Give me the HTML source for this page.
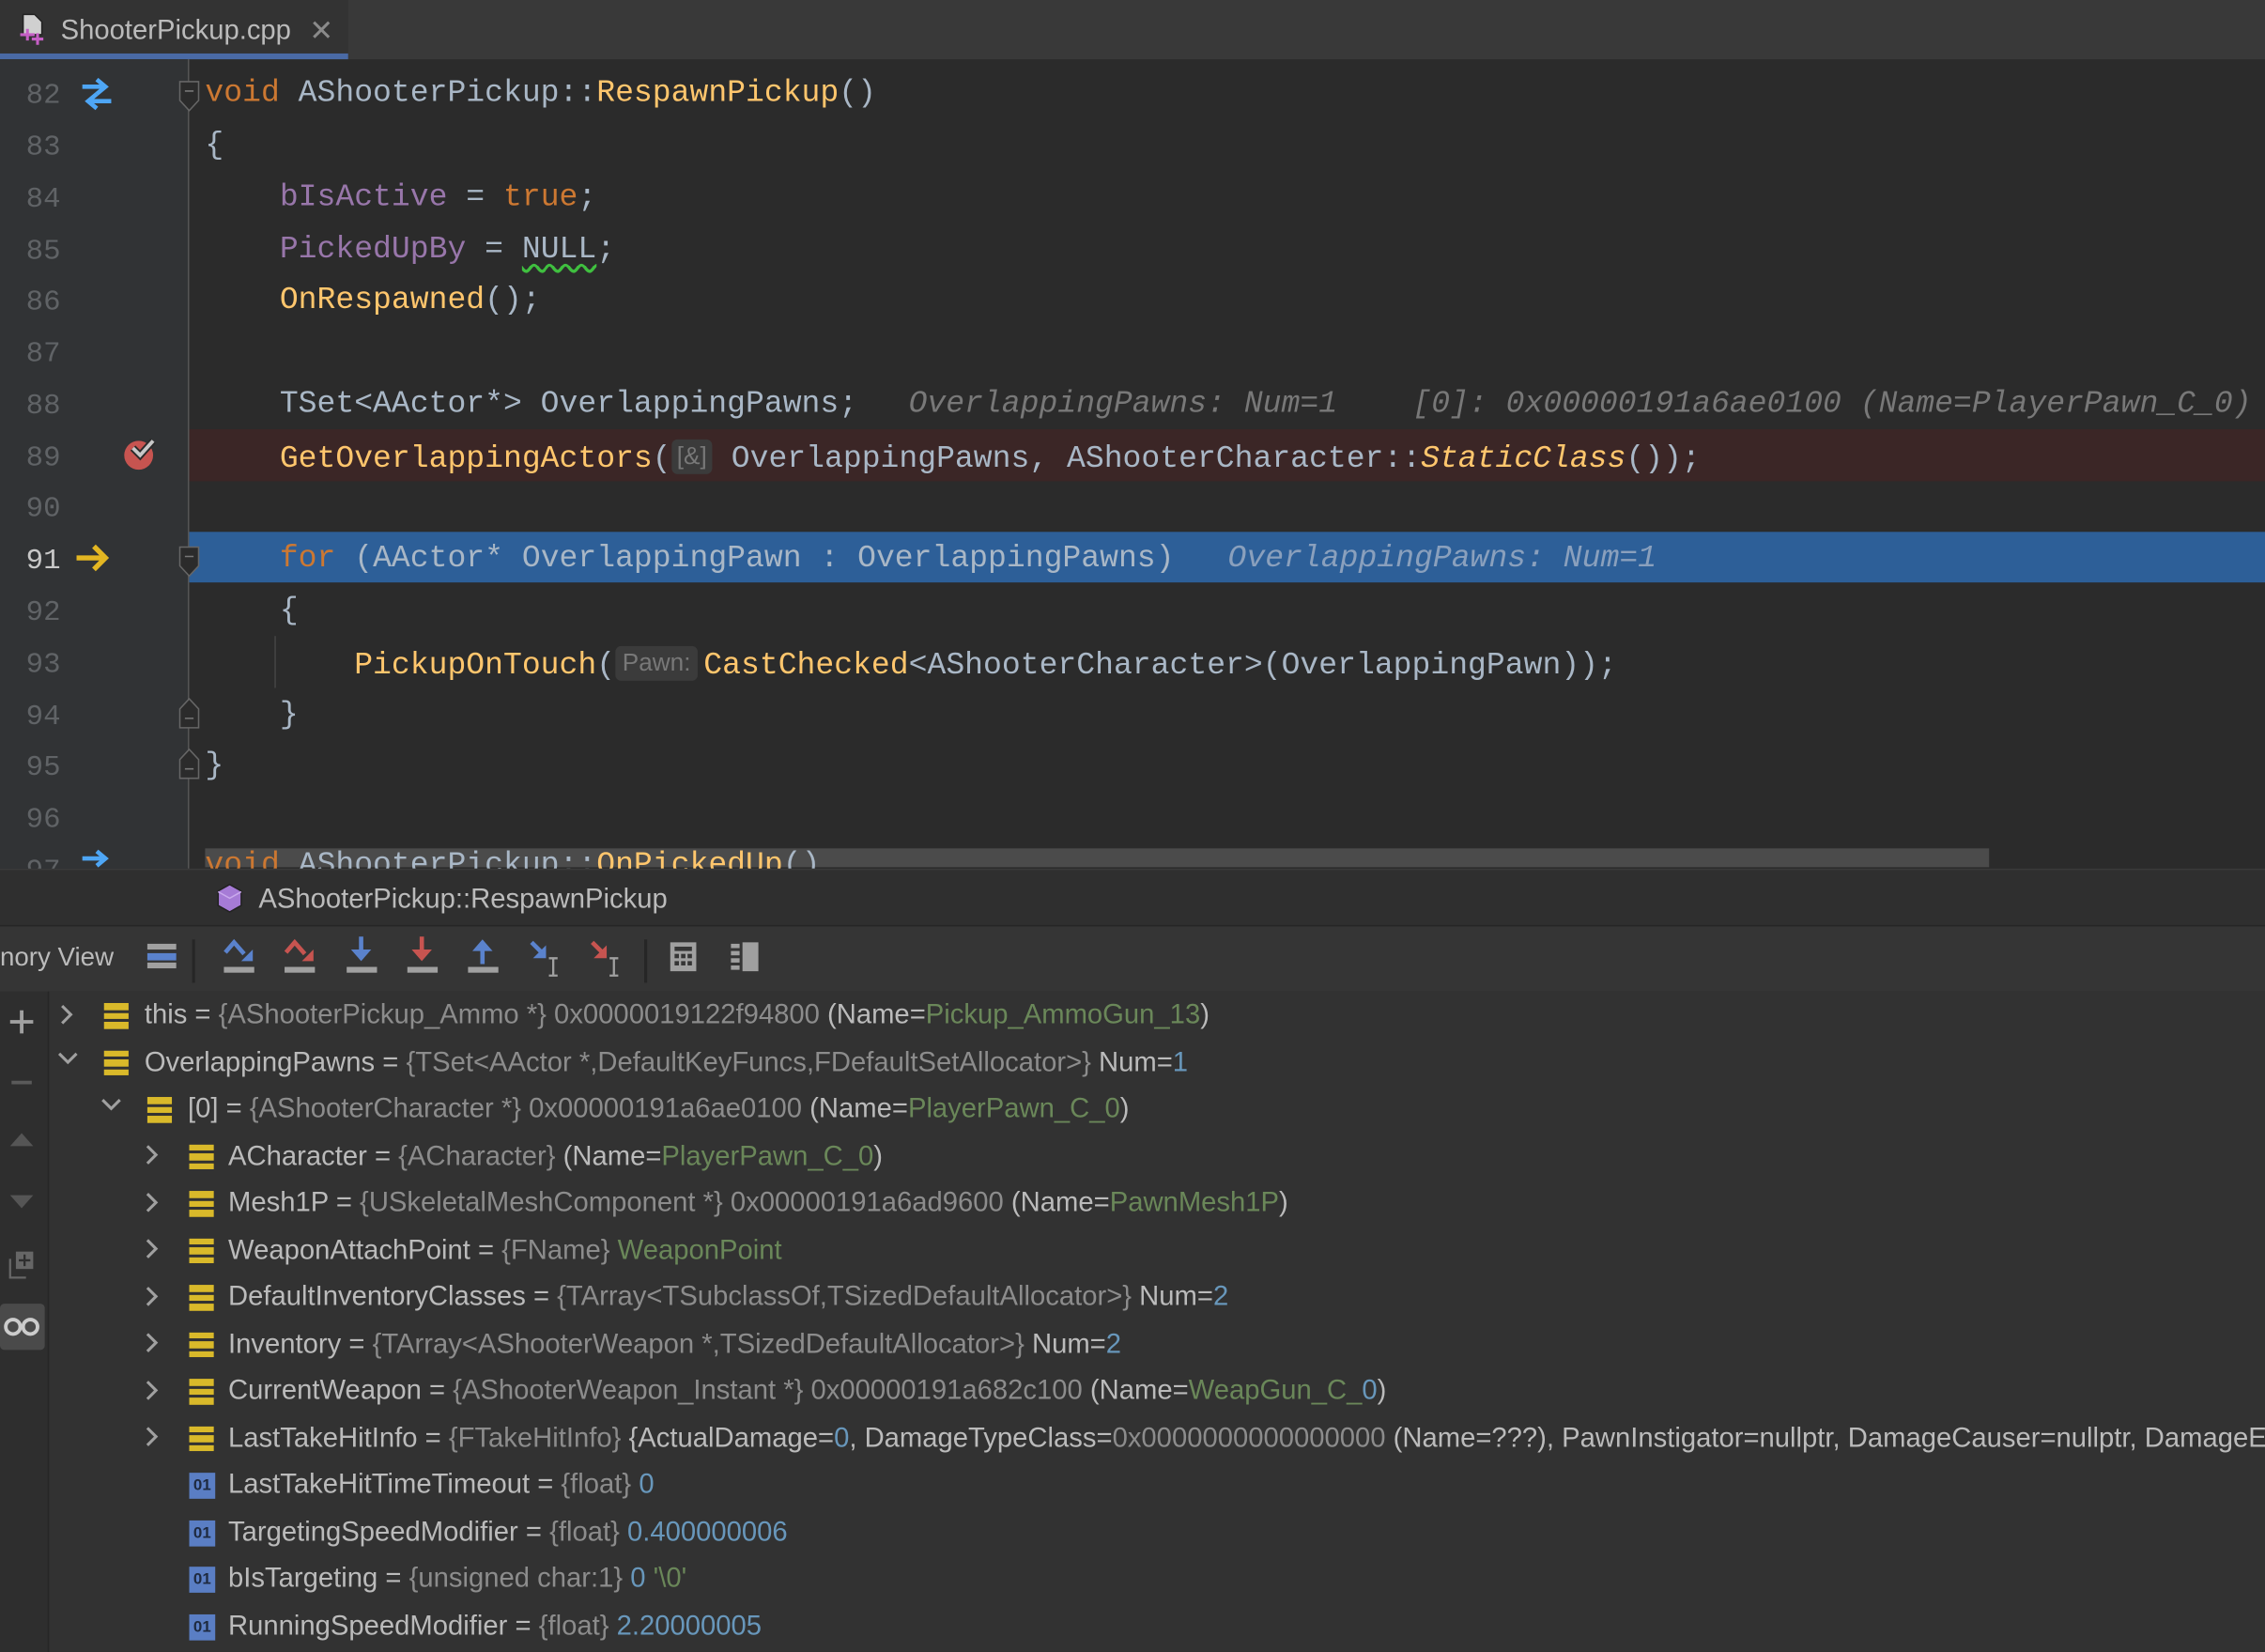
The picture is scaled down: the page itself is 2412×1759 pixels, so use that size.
<!DOCTYPE html>
<html><head><meta charset="utf-8">
<style>
*{margin:0;padding:0;box-sizing:border-box}
html,body{width:2412px;height:1759px;overflow:hidden;background:#2b2b2b}
#w{position:absolute;left:0;top:0;width:1568px;height:1143px;transform:scale(1.53827,1.5389);transform-origin:0 0;overflow:hidden;background:#2b2b2b}
.a{position:absolute}
.mono{font-family:"Liberation Mono",monospace;font-size:21.5px;white-space:pre;color:#a9b7c6}
.ln{position:absolute;left:0;width:42px;text-align:right;font-family:"Liberation Mono",monospace;font-size:20px;color:#606366}
.k{color:#cc7832}.f{color:#ffc66d}.p{color:#9876aa}.h{color:#787878;font-style:italic}
.hint{display:inline-block;background:#3b3b3b;color:#787878;font-family:"Liberation Sans",sans-serif;font-size:17px;border-radius:4px;padding:0 4px;line-height:24px;vertical-align:2px}
.row{position:absolute;height:32.5px;line-height:32.5px;font-family:"Liberation Sans",sans-serif;font-size:19px;white-space:pre;color:#bbbbbb}
.t{color:#8c8c8c}.g{color:#6a8759}.n{color:#6897bb}
.ic{position:absolute;width:17px;height:18px;top:7px}
.ic i{position:absolute;left:0;width:17px;height:4.5px;background:#d9b92a}
.num{position:absolute;width:18px;height:18px;top:7px;background:#5a7ec4;color:#1e2a40;font-size:11px;line-height:18px;text-align:center;font-weight:bold;font-family:"Liberation Sans",sans-serif}
</style></head><body><div id="w">
<div class="a" style="left:0;top:0;width:1568px;height:41px;background:#393939"></div>
<div class="a" style="left:0;top:0;width:241px;height:41px;background:#333333"></div>
<div class="a" style="left:0;top:37px;width:241px;height:4px;background:#4a6aa5"></div>
<svg class="a" style="left:12px;top:9px" width="22" height="24" viewBox="0 0 22 24"><path d="M4 1h8l5 5v9H4z" fill="#d0d0d0" stroke="#222" stroke-width="1"/><path d="M2 14h4v-3h2v3h4v2H8v3H6v-3H2z M10 17h3v-3h2v3h3v2h-3v3h-2v-3h-3z" fill="#c65fc6"/></svg>
<div class="a" style="left:42px;top:11px;font-family:'Liberation Sans',sans-serif;font-size:19px;color:#bbbbbb">ShooterPickup.cpp</div>
<div class="a" style="left:214px;top:9px;font-family:'Liberation Sans',sans-serif;font-size:20px;color:#8a8a8a">✕</div>
<div class="a" style="left:0;top:41px;width:131px;height:560px;background:#313335"></div>
<div class="a" style="left:130px;top:41px;width:1px;height:560px;background:#555"></div>
<div class="a" style="left:131px;top:297px;width:1437px;height:36px;background:#3b2626"></div>
<div class="a" style="left:131px;top:368px;width:1437px;height:35px;background:#2d5f98"></div>
<div class="ln" style="top:55px">82</div>
<div class="ln" style="top:91px">83</div>
<div class="ln" style="top:127px">84</div>
<div class="ln" style="top:163px">85</div>
<div class="ln" style="top:198px">86</div>
<div class="ln" style="top:234px">87</div>
<div class="ln" style="top:270px">88</div>
<div class="ln" style="top:306px">89</div>
<div class="ln" style="top:341px">90</div>
<div class="ln" style="top:377px;color:#c8c8c8">91</div>
<div class="ln" style="top:413px">92</div>
<div class="ln" style="top:449px">93</div>
<div class="ln" style="top:485px">94</div>
<div class="ln" style="top:520px">95</div>
<div class="ln" style="top:556px">96</div>
<div class="ln" style="top:592px">97</div>
<svg class="a" style="left:54px;top:52px" width="26" height="26" viewBox="0 0 26 26"><path d="M3 8h14M13 3l6 5-6 5" stroke="#4ea6f5" stroke-width="3" fill="none"/><path d="M23 18H9M13 13l-6 5 6 5" stroke="#4ea6f5" stroke-width="3" fill="none"/></svg>
<svg class="a" style="left:54px;top:586px" width="26" height="16" viewBox="0 0 26 16"><path d="M3 8h14M13 3l6 5-6 5" stroke="#4ea6f5" stroke-width="3" fill="none"/></svg>
<svg class="a" style="left:84px;top:300px" width="26" height="28" viewBox="0 0 26 28"><circle cx="12" cy="15" r="10" fill="#c75450"/><path d="M8 10l5 5 9-10" stroke="#2b2b2b" stroke-width="5" fill="none"/><path d="M8 10l5 5 9-10" stroke="#c8c8c8" stroke-width="2.5" fill="none"/></svg>
<svg class="a" style="left:51px;top:374px" width="26" height="24" viewBox="0 0 26 24"><path d="M2 12h20M14 4l8 8-8 8" stroke="#e3b622" stroke-width="3.5" fill="none"/></svg>
<svg class="a" style="left:123px;top:55px" width="16" height="24"><path d="M1.5 1.5h13v13l-6.5 7-6.5-7z" fill="#2b2b2b" stroke="#666"/><path d="M5 8h6" stroke="#777"/></svg>
<svg class="a" style="left:123px;top:377px" width="16" height="24"><path d="M1.5 1.5h13v13l-6.5 7-6.5-7z" fill="#2b2b2b" stroke="#666"/><path d="M5 8h6" stroke="#777"/></svg>
<svg class="a" style="left:123px;top:482px" width="16" height="24"><path d="M8 1.5l6.5 7v13h-13v-13z" fill="#2b2b2b" stroke="#666"/><path d="M5 15h6" stroke="#777"/></svg>
<svg class="a" style="left:123px;top:517px" width="16" height="24"><path d="M8 1.5l6.5 7v13h-13v-13z" fill="#2b2b2b" stroke="#666"/><path d="M5 15h6" stroke="#777"/></svg>
<div class="a" style="left:190px;top:440px;width:1px;height:36px;background:#444"></div>
<div class="a mono" style="left:142px;top:53px"><span class="k">void</span> AShooterPickup::<span class="f">RespawnPickup</span>()</div>
<div class="a mono" style="left:142px;top:89px">{</div>
<div class="a mono" style="left:142px;top:125px">    <span class="p">bIsActive</span> = <span class="k">true</span>;</div>
<div class="a mono" style="left:142px;top:161px">    <span class="p">PickedUpBy</span> = <span style="text-decoration:underline wavy #3fbf3f;text-underline-offset:4px">NULL</span>;</div>
<div class="a mono" style="left:142px;top:196px">    <span class="f">OnRespawned</span>();</div>
<div class="a mono" style="left:142px;top:268px">    TSet&lt;AActor*&gt; OverlappingPawns;</div>
<div class="a mono h" style="left:629px;top:268px">OverlappingPawns: Num=1</div>
<div class="a mono h" style="left:978px;top:268px">[0]: 0x00000191a6ae0100 (Name=PlayerPawn_C_0)</div>
<div class="a mono" style="left:142px;top:304px">    <span class="f">GetOverlappingActors</span>(<span class="hint">[&amp;]</span> OverlappingPawns, AShooterCharacter::<span class="f" style="font-style:italic">StaticClass</span>());</div>
<div class="a mono" style="left:142px;top:375px">    <span class="k">for</span> (AActor* OverlappingPawn : OverlappingPawns)</div>
<div class="a mono h" style="left:850px;top:375px;color:#8aa0bd">OverlappingPawns: Num=1</div>
<div class="a mono" style="left:142px;top:411px">    {</div>
<div class="a mono" style="left:142px;top:447px">        <span class="f">PickupOnTouch</span>(<span class="hint" style="margin-right:4px;padding:0 5px">Pawn:</span><span class="f">CastChecked</span>&lt;AShooterCharacter&gt;(OverlappingPawn));</div>
<div class="a mono" style="left:142px;top:483px">    }</div>
<div class="a mono" style="left:142px;top:518px">}</div>
<div class="a" style="left:142px;top:587px;width:1235px;height:13px;background:#4b4b4b"></div>
<div class="a mono" style="left:142px;top:587px;height:14px;overflow:hidden"><span class="k">void</span> AShooterPickup::<span class="f">OnPickedUp</span>()</div>
<div class="a" style="left:0;top:601px;width:1568px;height:39px;background:#2f2f2f;border-top:1px solid #3a3a3a"></div>
<svg class="a" style="left:149px;top:611px" width="20" height="22" viewBox="0 0 20 22"><path d="M10 1l8 4.5v10L10 20l-8-4.5v-10z" fill="#a67bd6" stroke="#222"/><path d="M2 6l8 4.5 8-4.5" stroke="#c9a9ec" fill="none"/></svg>
<div class="a" style="left:179px;top:612px;font-family:'Liberation Sans',sans-serif;font-size:19px;color:#bbbbbb">AShooterPickup::RespawnPickup</div>
<div class="a" style="left:0;top:640px;width:1568px;height:46px;background:#353535;border-top:1px solid #262626"></div>
<div class="a" style="left:0;top:652px;font-family:'Liberation Sans',sans-serif;font-size:18px;color:#bbbbbb">nory View</div>
<svg class="a" style="left:0;top:640px" width="540" height="46">
<g fill="#a0a0a0"><rect x="102" y="13" width="20" height="4"/><rect x="102" y="26" width="20" height="4"/></g><rect x="102" y="19.5" width="20" height="5" fill="#5a82cc"/>
<rect x="133" y="10" width="2" height="30" fill="#262626"/>
<g fill="#a0a0a0"><rect x="155" y="29" width="21" height="4"/><rect x="197" y="29" width="21" height="4"/><rect x="240" y="29" width="21" height="4"/><rect x="282" y="29" width="21" height="4"/><rect x="324" y="29" width="21" height="4"/></g>
<path d="M156 19l6-7 7 8" stroke="#5a82cc" stroke-width="3" fill="none"/><path d="M175 17v8h-8z" fill="#5a82cc"/>
<path d="M198 19l6-7 7 8" stroke="#c75450" stroke-width="3" fill="none"/><path d="M217 17v8h-8z" fill="#c75450"/>
<path d="M250 8v12" stroke="#5a82cc" stroke-width="3"/><path d="M243 17h14l-7 8z" fill="#5a82cc"/>
<path d="M292 8v12" stroke="#c75450" stroke-width="3"/><path d="M285 17h14l-7 8z" fill="#c75450"/>
<path d="M334 15v12" stroke="#5a82cc" stroke-width="3"/><path d="M327 18h14l-7-8z" fill="#5a82cc"/>
<path d="M368 12l8 8" stroke="#5a82cc" stroke-width="3"/><path d="M378 14v9h-9z" fill="#5a82cc"/><path d="M380 23h6M383 23v12M380 35h6" stroke="#a0a0a0" stroke-width="1.5"/>
<path d="M410 12l8 8" stroke="#c75450" stroke-width="3"/><path d="M420 14v9h-9z" fill="#c75450"/><path d="M422 23h6M425 23v12M422 35h6" stroke="#a0a0a0" stroke-width="1.5"/>
<rect x="446" y="10" width="2" height="30" fill="#262626"/>
<rect x="464" y="12" width="18" height="20" fill="#a0a0a0"/><rect x="467" y="15" width="12" height="3" fill="#353535"/><g fill="#353535"><rect x="467" y="20" width="3" height="3"/><rect x="471.5" y="20" width="3" height="3"/><rect x="476" y="20" width="3" height="3"/><rect x="467" y="25" width="3" height="3"/><rect x="471.5" y="25" width="3" height="3"/><rect x="476" y="25" width="3" height="3"/></g>
<g fill="#a0a0a0"><rect x="506" y="13" width="6" height="3"/><rect x="506" y="18" width="6" height="3"/><rect x="506" y="23" width="6" height="3"/><rect x="506" y="28" width="6" height="3"/><rect x="514" y="12" width="11" height="20"/></g>
</svg>
<div class="a" style="left:0;top:686px;width:1568px;height:457px;background:#323232"></div>
<div class="a" style="left:0;top:686px;width:34px;height:457px;background:#2e2e2e;border-right:1px solid #262626"></div>
<svg class="a" style="left:0;top:686px" width="34" height="260">
<path d="M15 13v16M7 21h16" stroke="#a0a0a0" stroke-width="2.5"/>
<path d="M8 63h14" stroke="#5a5a5a" stroke-width="2.5"/>
<path d="M15 98l8 9H7z" fill="#555"/>
<path d="M7 141h16l-8 9z" fill="#555"/>
<path d="M7 185v13h11" stroke="#666" stroke-width="1.5" fill="none"/><rect x="11" y="180" width="12" height="12" fill="#666"/><path d="M17 182v8M13 186h8" stroke="#2e2e2e" stroke-width="1.5"/>
<rect x="0" y="216" width="31" height="32" rx="3" fill="#4a4a4a"/><circle cx="9" cy="232" r="5" stroke="#ccc" stroke-width="2.5" fill="none"/><circle cx="21" cy="232" r="5" stroke="#ccc" stroke-width="2.5" fill="none"/>
</svg>
<svg class="a" style="left:0;top:686px" width="130" height="330" fill="none" stroke="#a0a0a0" stroke-width="2">
<path d="M43 10l6 6-6 6"/><path d="M41 43l6 6 6-6"/><path d="M71 75l6 6 6-6"/>
<path d="M102 107l6 6-6 6"/><path d="M102 140l6 6-6 6"/><path d="M102 172l6 6-6 6"/><path d="M102 205l6 6-6 6"/><path d="M102 237l6 6-6 6"/><path d="M102 270l6 6-6 6"/><path d="M102 302l6 6-6 6"/>
</svg>
<div class="row" style="left:0;top:687px;width:1568px"><div class="ic" style="left:72px"><i style="top:0"></i><i style="top:6.5px"></i><i style="top:13px"></i></div><span style="position:absolute;left:100px">this = <span class="t">{AShooterPickup_Ammo *} 0x0000019122f94800</span> (Name=<span class="g">Pickup_AmmoGun_13</span>)</span></div>
<div class="row" style="left:0;top:719.5px;width:1568px"><div class="ic" style="left:72px"><i style="top:0"></i><i style="top:6.5px"></i><i style="top:13px"></i></div><span style="position:absolute;left:100px">OverlappingPawns = <span class="t">{TSet&lt;AActor *,DefaultKeyFuncs,FDefaultSetAllocator&gt;}</span> Num=<span class="n">1</span></span></div>
<div class="row" style="left:0;top:752px;width:1568px"><div class="ic" style="left:102px"><i style="top:0"></i><i style="top:6.5px"></i><i style="top:13px"></i></div><span style="position:absolute;left:130px">[0] = <span class="t">{AShooterCharacter *} 0x00000191a6ae0100</span> (Name=<span class="g">PlayerPawn_C_0</span>)</span></div>
<div class="row" style="left:0;top:784.5px;width:1568px"><div class="ic" style="left:131px"><i style="top:0"></i><i style="top:6.5px"></i><i style="top:13px"></i></div><span style="position:absolute;left:158px">ACharacter = <span class="t">{ACharacter}</span> (Name=<span class="g">PlayerPawn_C_0</span>)</span></div>
<div class="row" style="left:0;top:817px;width:1568px"><div class="ic" style="left:131px"><i style="top:0"></i><i style="top:6.5px"></i><i style="top:13px"></i></div><span style="position:absolute;left:158px">Mesh1P = <span class="t">{USkeletalMeshComponent *} 0x00000191a6ad9600</span> (Name=<span class="g">PawnMesh1P</span>)</span></div>
<div class="row" style="left:0;top:849.5px;width:1568px"><div class="ic" style="left:131px"><i style="top:0"></i><i style="top:6.5px"></i><i style="top:13px"></i></div><span style="position:absolute;left:158px">WeaponAttachPoint = <span class="t">{FName}</span> <span class="g">WeaponPoint</span></span></div>
<div class="row" style="left:0;top:882px;width:1568px"><div class="ic" style="left:131px"><i style="top:0"></i><i style="top:6.5px"></i><i style="top:13px"></i></div><span style="position:absolute;left:158px">DefaultInventoryClasses = <span class="t">{TArray&lt;TSubclassOf,TSizedDefaultAllocator&gt;}</span> Num=<span class="n">2</span></span></div>
<div class="row" style="left:0;top:914.5px;width:1568px"><div class="ic" style="left:131px"><i style="top:0"></i><i style="top:6.5px"></i><i style="top:13px"></i></div><span style="position:absolute;left:158px">Inventory = <span class="t">{TArray&lt;AShooterWeapon *,TSizedDefaultAllocator&gt;}</span> Num=<span class="n">2</span></span></div>
<div class="row" style="left:0;top:947px;width:1568px"><div class="ic" style="left:131px"><i style="top:0"></i><i style="top:6.5px"></i><i style="top:13px"></i></div><span style="position:absolute;left:158px">CurrentWeapon = <span class="t">{AShooterWeapon_Instant *} 0x00000191a682c100</span> (Name=<span class="g">WeapGun_C_</span><span class="n">0</span>)</span></div>
<div class="row" style="left:0;top:979.5px;width:1568px;overflow:hidden"><div class="ic" style="left:131px"><i style="top:0"></i><i style="top:6.5px"></i><i style="top:13px"></i></div><span style="position:absolute;left:158px">LastTakeHitInfo = <span class="t">{FTakeHitInfo}</span> {ActualDamage=<span class="n">0</span>, DamageTypeClass=<span class="t">0x0000000000000000</span> (Name=???), PawnInstigator=nullptr, DamageCauser=nullptr, DamageEventClassID=0}</span></div>
<div class="row" style="left:0;top:1012px;width:1568px"><div class="num" style="left:131px">01</div><span style="position:absolute;left:158px">LastTakeHitTimeTimeout = <span class="t">{float}</span> <span class="n">0</span></span></div>
<div class="row" style="left:0;top:1044.5px;width:1568px"><div class="num" style="left:131px">01</div><span style="position:absolute;left:158px">TargetingSpeedModifier = <span class="t">{float}</span> <span class="n">0.400000006</span></span></div>
<div class="row" style="left:0;top:1077px;width:1568px"><div class="num" style="left:131px">01</div><span style="position:absolute;left:158px">bIsTargeting = <span class="t">{unsigned char:1}</span> <span class="n">0</span> <span class="g">'\0'</span></span></div>
<div class="row" style="left:0;top:1109.5px;width:1568px"><div class="num" style="left:131px">01</div><span style="position:absolute;left:158px">RunningSpeedModifier = <span class="t">{float}</span> <span class="n">2.20000005</span></span></div>
</div></body></html>
